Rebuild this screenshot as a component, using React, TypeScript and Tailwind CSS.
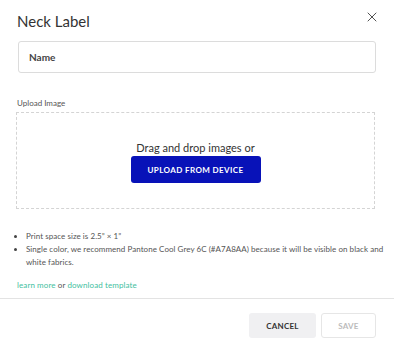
import { X } from 'lucide-react'

const bullets = [
  'Print space size is 2.5\u201D \u00D7 1\u201D',
  'Single color, we recommend Pantone Cool Grey 6C (#A7A8AA) because it will be visible on black and white fabrics.',
]

export default function App() {
  return (
    <div className="w-[394px] h-[348px] bg-white text-[#333] font-['Lato',sans-serif] flex flex-col">
      <div className="flex justify-between pl-[17px] pr-[14px] pt-[11px]">
        <h1 className="text-[15px] leading-[20px] text-[#333]">Neck Label</h1>
        <X className="w-[16px] h-[16px] -mt-[2px] text-[#444]" strokeWidth={1.4} />
      </div>

      <div className="mt-[10px] ml-[18px] w-[358px] h-[32px] border border-[#dcdcdc] rounded-[3px] flex items-center px-[10px]">
        <span className="text-[10px] font-bold text-[#444]">Name</span>
      </div>

      <div className="mt-[24px] ml-[17px] text-[8px] leading-[12px] text-[#555]">Upload Image</div>

      <div className="mt-[3px] ml-[16px] w-[359px] h-[97px] border border-dashed border-[#d4d4d4] flex flex-col items-center pt-[28px]">
        <p className="text-[11px] leading-[14px] text-[#333]">Drag and drop images or</p>
        <button className="mt-[1px] w-[130px] h-[27px] rounded-[3px] bg-[#0812b8] text-white text-[8px] font-bold tracking-[0.4px]">
          UPLOAD FROM DEVICE
        </button>
      </div>

      <ul className="mt-[21px] pl-[14px] w-[384px] flex flex-col text-[8px] leading-[13px] tracking-[0.05px] text-[#555]">
        {bullets.map((b, i) => (
          <li key={i} className="flex">
            <span className="w-[3px] h-[3px] rounded-full bg-[#444] mt-[5px] shrink-0" />
            <span className="ml-[9px]">{b}</span>
          </li>
        ))}
      </ul>

      <p className="mt-[10px] pl-[17px] text-[8px] leading-[13px] tracking-[0.1px] text-[#555]">
        <span className="text-[#3fc0a0]">learn more</span> or{' '}
        <span className="text-[#3fc0a0]">download template</span>
      </p>

      <div className="mt-[6px] border-t border-[#e3e3e3]" />

      <div className="flex justify-end gap-[5px] pr-[18px] mt-[14px]">
        <button className="w-[67px] h-[25px] rounded-[3px] bg-[#f0f0f2] text-[8px] font-bold tracking-[0.2px] text-[#333]">CANCEL</button>
        <button className="w-[55px] h-[25px] rounded-[3px] bg-white border border-[#e6e6e6] text-[8px] font-bold tracking-[0.2px] text-[#bbb]">SAVE</button>
      </div>
    </div>
  )
}
